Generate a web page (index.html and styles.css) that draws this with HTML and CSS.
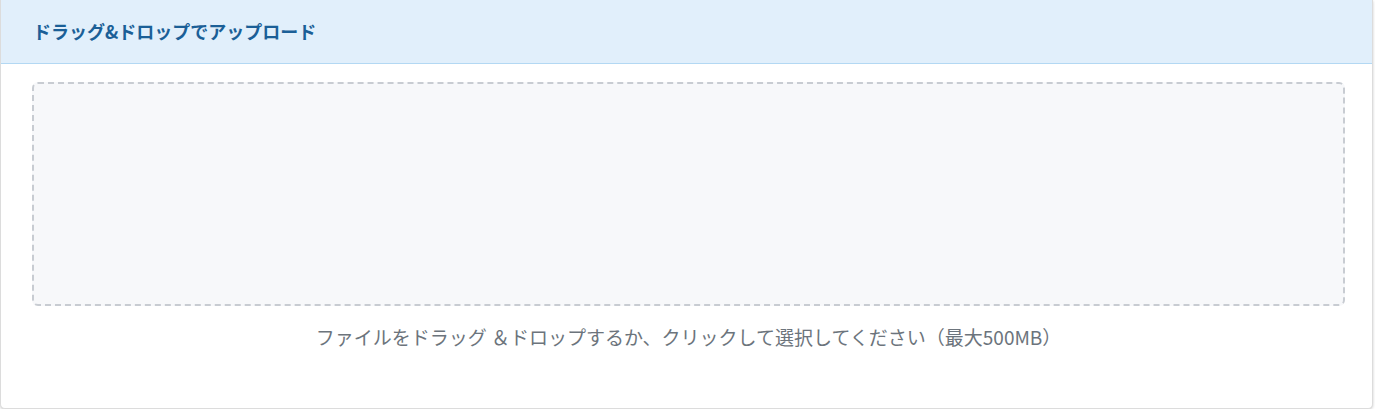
FILE: index.html
```html
<!DOCTYPE html>
<html lang="ja">
<head>
<meta charset="utf-8">
<link rel="stylesheet" href="styles.css">
</head>
<body>
<div class="card">
  <div class="card-header">
    <h2 class="title">ドラッグ&amp;ドロップでアップロード</h2>
  </div>
  <div class="card-body">
    <div class="dropzone"></div>
    <p class="hint">ファイルをドラッグ ＆ドロップするか、クリックして選択してください（最大500MB）</p>
  </div>
</div>
</body>
</html>
```
FILE: styles.css
```css
html, body {
  margin: 0;
  padding: 0;
  background: #ffffff;
}
body {
  font-family: "Noto Sans CJK JP", "Noto Sans", sans-serif;
}
.card {
  margin: 0 2px 0 0;
  height: 409px;
  box-sizing: border-box;
  border: 1px solid #dcdcdc;
  border-top: none;
  border-radius: 0 0 5px 5px;
  box-shadow: 0 1px 3px rgba(0, 0, 0, 0.2);
  background: #ffffff;
  overflow: hidden;
}
.card-header {
  height: 64px;
  box-sizing: border-box;
  background: #e1effb;
  border-bottom: 1px solid #b3d8f3;
  display: flex;
  align-items: center;
  padding: 0 0 1px 32px;
}
.title {
  margin: 0;
  font-size: 18px;
  font-weight: 700;
  color: #1b5f97;
}
.card-body {
  padding: 18px 27px 0 31px;
}
.dropzone {
  height: 224px;
  box-sizing: border-box;
  border: 2px dashed #c8ccd2;
  border-radius: 6px;
  background: #f7f8fa;
}
.hint {
  margin: 17px 0 0;
  text-align: center;
  font-size: 19px;
  line-height: 28px;
  color: #6c747c;
}
```
